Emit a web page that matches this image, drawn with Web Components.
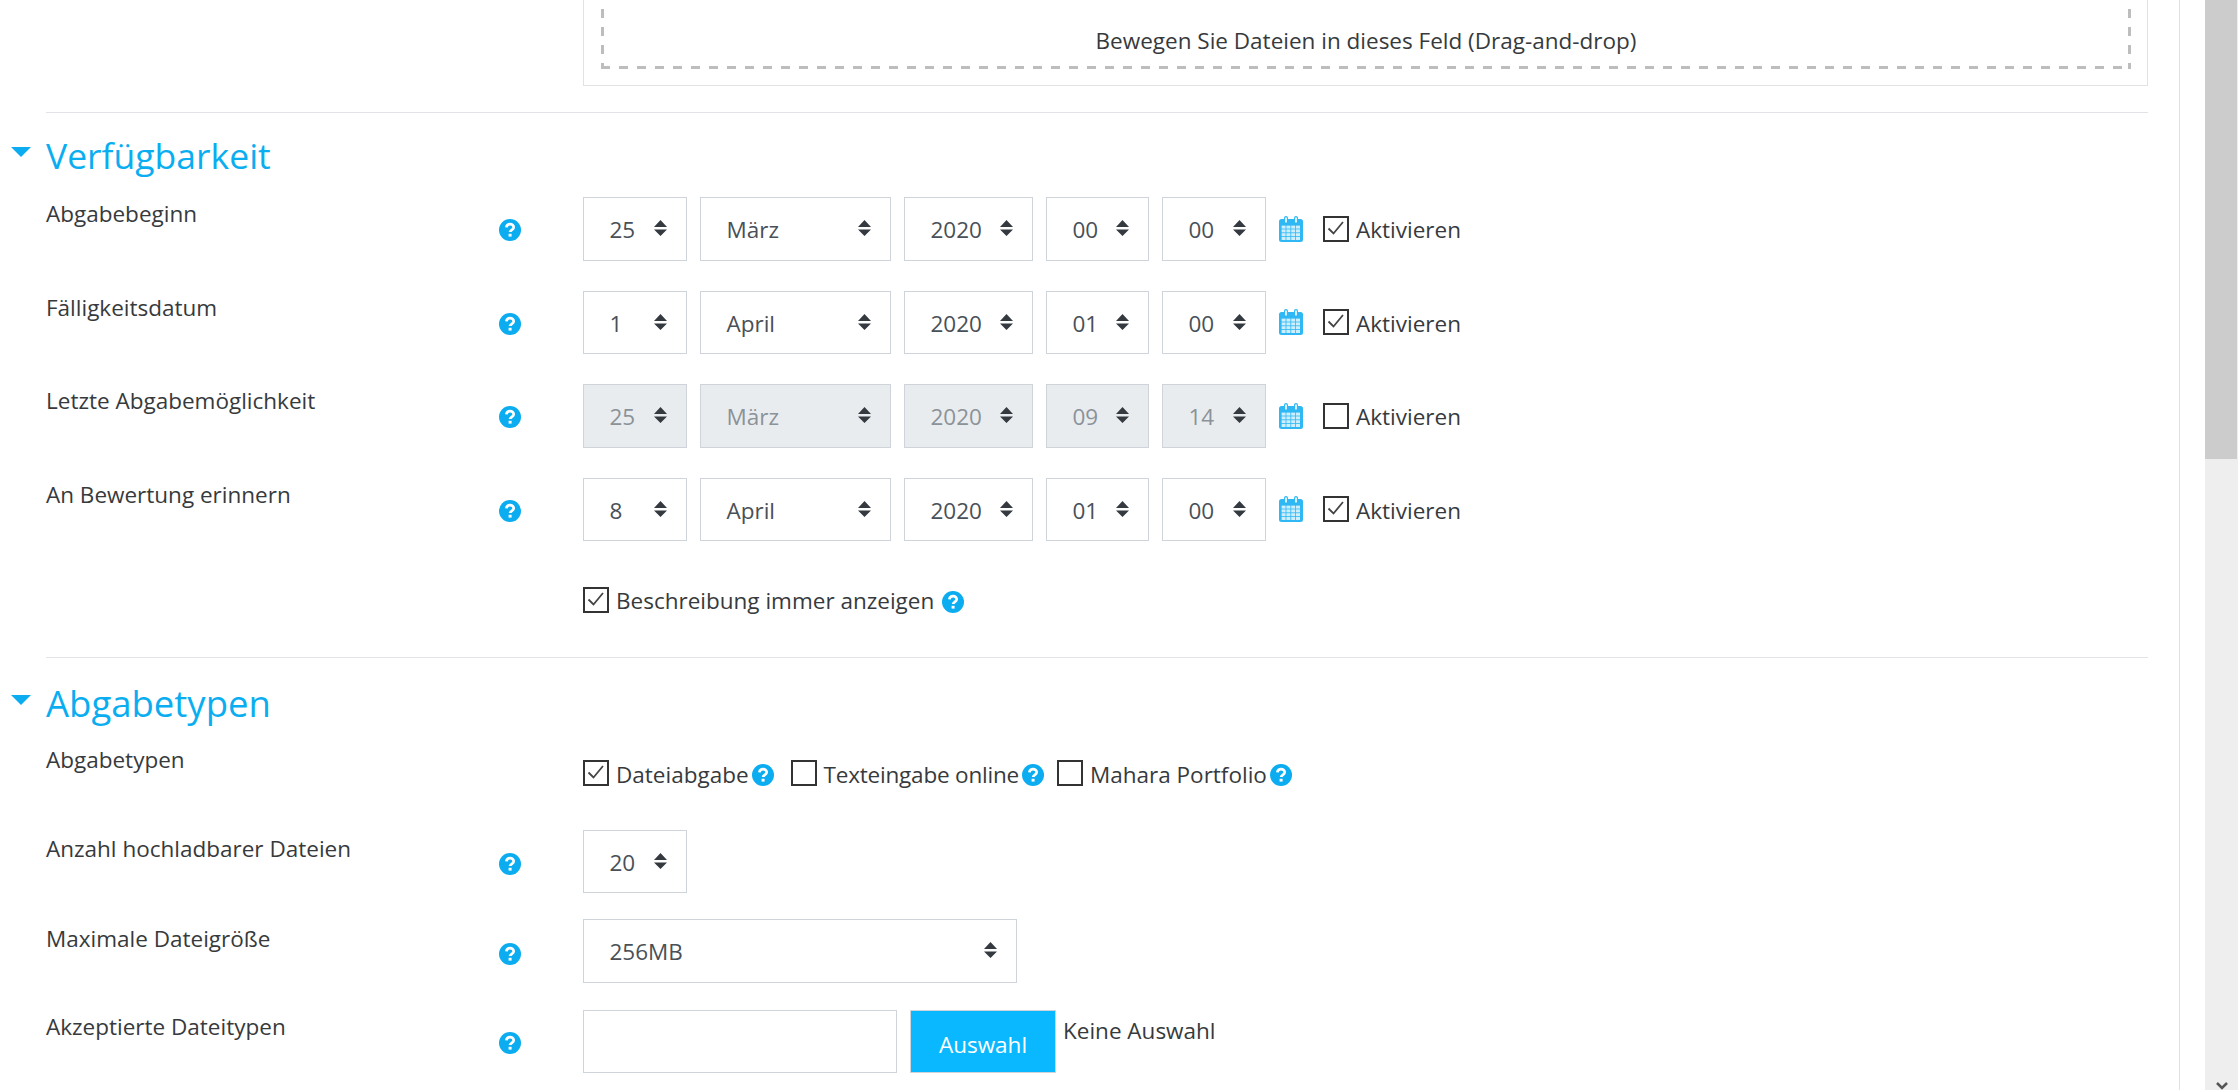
<!DOCTYPE html>
<html lang="de">
<head>
<meta charset="utf-8">
<title>Aufgabe bearbeiten</title>
<style>
  html, body { margin: 0; height: 100%; overflow: hidden; background: #fff; }
  body { font-family: "Open Sans", "Noto Sans", sans-serif; font-size: 22.5px; color: #373a3c; }
</style>
</head>
<body>
<app-page>
  <drop-zone>Bewegen Sie Dateien in dieses Feld (Drag-and-drop)</drop-zone>
  <form-divider style="margin-top:26px"></form-divider>

  <form-section style="font-size:35.5px">Verfügbarkeit</form-section>
  <form-row label="Abgabebeginn"><date-group day="25" month="März" year="2020" hour="00" minute="00" checked></date-group></form-row>
  <form-row label="Fälligkeitsdatum"><date-group day="1" month="April" year="2020" hour="01" minute="00" checked></date-group></form-row>
  <form-row label="Letzte Abgabemöglichkeit"><date-group day="25" month="März" year="2020" hour="09" minute="14" disabled></date-group></form-row>
  <form-row label="An Bewertung erinnern"><date-group day="8" month="April" year="2020" hour="01" minute="00" checked></date-group></form-row>
  <form-row nohelp style="height:85.5px;margin:0;align-items:flex-start">
    <div style="display:flex;align-items:center;gap:8px;padding-top:12px">
      <check-box checked>Beschreibung immer anzeigen</check-box><help-icon style="margin-top:4px"></help-icon>
    </div>
  </form-row>
  <form-divider></form-divider>

  <form-section style="height:85px;padding-top:6px;box-sizing:border-box;font-size:36.5px">Abgabetypen</form-section>
  <form-row label="Abgabetypen" nohelp style="height:87px;margin:0">
    <div style="display:flex;align-items:center;padding-top:14px">
      <check-box checked>Dateiabgabe</check-box><help-icon style="margin:3px 17px 0 3px"></help-icon>
      <check-box style="letter-spacing:-.2px">Texteingabe online</check-box><help-icon style="margin:3px 13px 0 3px"></help-icon>
      <check-box>Mahara Portfolio</check-box><help-icon style="margin:3px 0 0 3px"></help-icon>
    </div>
  </form-row>
  <form-row label="Anzahl hochladbarer Dateien" style="margin-bottom:26px;--label-shift:2px"><fake-select value="20" width="104"></fake-select></form-row>
  <form-row label="Maximale Dateigröße" style="margin-bottom:27px;--label-shift:3px"><fake-select value="256MB" width="434"></fake-select></form-row>
  <form-row label="Akzeptierte Dateitypen"><file-picker></file-picker></form-row>
</app-page>

<script>
const BLUE = '#0cadf0';

class HelpIcon extends HTMLElement {
  constructor() {
    super();
    this.attachShadow({ mode: 'open' }).innerHTML = `
      <style>:host { display: inline-flex; width: 22px; height: 22px; flex: none; }</style>
      <svg width="22" height="22" viewBox="0 0 22 22">
        <circle cx="11" cy="11" r="11" fill="${BLUE}"/>
        <path d="M7.4 8.4c.2-2 1.700-3.300 3.700-3.300s3.600 1.300 3.600 3.100c0 2.600-3.600 2.500-3.600 4.900" fill="none" stroke="#fff" stroke-width="2.700"/>
        <rect x="9.600" y="14.800" width="3" height="2.800" fill="#fff"/>
      </svg>`;
  }
}

class CalendarIcon extends HTMLElement {
  constructor() {
    super();
    let cells = '';
    for (let r = 0; r < 4; r++) {
      for (let c = 0; c < 4; c++) {
        cells += `<rect x="${2.6 + c * 4.8}" y="${9.6 + r * 3.8}" width="4" height="3" fill="#cdeefc"/>`;
      }
    }
    this.attachShadow({ mode: 'open' }).innerHTML = `
      <style>:host { display: inline-flex; width: 24px; height: 26px; flex: none; }</style>
      <svg width="24" height="26" viewBox="0 0 24 26">
        <rect x="0" y="3" width="24" height="23" rx="2.500" fill="#2fb8f3"/>
        ${cells}
        <rect x="5" y="0" width="4" height="8" rx="2" fill="#2fb8f3"/>
        <rect x="15" y="0" width="4" height="8" rx="2" fill="#2fb8f3"/>
        <rect x="6.200" y="1.500" width="1.600" height="5" fill="#fff"/>
        <rect x="16.200" y="1.500" width="1.600" height="5" fill="#fff"/>
      </svg>`;
  }
}

class CheckBox extends HTMLElement {
  constructor() {
    super();
    this.attachShadow({ mode: 'open' }).innerHTML = `
      <style>
        :host { display: inline-flex; align-items: center; gap: 7px; white-space: nowrap; }
        .box { width: 26px; height: 26px; box-sizing: border-box; border: 2.500px solid #333; flex: none; }
        .text { padding-top: 2px; }
        svg { display: block; }
      </style>
      <span class="box">
        ${this.hasAttribute('checked') ? `<svg width="21" height="21" viewBox="0 0 21 21"><path d="M3.500 10.500 8.500 15.500 18 4" fill="none" stroke="#444" stroke-width="1.800"/></svg>` : ''}
      </span>
      <span class="text"><slot></slot></span>`;
  }
}

class FakeSelect extends HTMLElement {
  constructor() {
    super();
    const disabled = this.hasAttribute('disabled');
    this.attachShadow({ mode: 'open' }).innerHTML = `
      <style>
        :host {
          display: flex; align-items: center; justify-content: space-between; flex: none;
          box-sizing: border-box; width: ${this.getAttribute('width')}px; height: 63.5px;
          padding: 2px 19px 0 25.500px;
          border: 1px solid #ced4da;
          background: ${disabled ? '#e9ecef' : '#fff'};
          color: ${disabled ? '#8b9298' : '#495057'};
        }
        svg { display: block; margin-top: -3px; }
      </style>
      <span>${this.getAttribute('value')}</span>
      <svg width="13" height="16" viewBox="0 0 13 16">
        <path d="M6.500 0 13 7H0ZM0 9.500H13L6.500 16Z" fill="#343a40"/>
      </svg>`;
  }
}

class DateGroup extends HTMLElement {
  constructor() {
    super();
    const a = n => this.getAttribute(n);
    const dis = this.hasAttribute('disabled') ? 'disabled' : '';
    const chk = this.hasAttribute('checked') ? 'checked' : '';
    this.attachShadow({ mode: 'open' }).innerHTML = `
      <style>
        :host { display: flex; align-items: center; gap: 13px; }
        check-box { margin-left: 7px; }
      </style>
      <fake-select width="104" value="${a('day')}" ${dis}></fake-select>
      <fake-select width="191" value="${a('month')}" ${dis}></fake-select>
      <fake-select width="129" value="${a('year')}" ${dis}></fake-select>
      <fake-select width="103" value="${a('hour')}" ${dis}></fake-select>
      <fake-select width="104" value="${a('minute')}" ${dis}></fake-select>
      <calendar-icon></calendar-icon>
      <check-box ${chk}>Aktivieren</check-box>`;
  }
}

class FormRow extends HTMLElement {
  constructor() {
    super();
    const help = this.hasAttribute('nohelp') ? '' : '<help-icon></help-icon>';
    this.attachShadow({ mode: 'open' }).innerHTML = `
      <style>
        :host { display: flex; align-items: flex-start; margin-bottom: 30px; }
        .label { width: 453px; flex: none; line-height: 34px; padding-top: var(--label-shift, 0); }
        .help { width: 84px; flex: none; padding-top: calc(20px + var(--label-shift, 0px) * 0.6); }
      </style>
      <div class="label">${this.getAttribute('label') || ''}</div>
      <div class="help">${help}</div>
      <slot></slot>`;
  }
}

class FormSection extends HTMLElement {
  constructor() {
    super();
    this.attachShadow({ mode: 'open' }).innerHTML = `
      <style>
        :host { display: flex; align-items: center; height: 84px; margin-left: -35px; gap: 15px; color: #0aaef0; font-size: 36px; }
        svg { flex: none; margin-top: -6px; }
      </style>
      <svg width="20" height="10" viewBox="0 0 20 10"><path d="M0 0H20L10 10Z" fill="${BLUE}"/></svg>
      <span><slot></slot></span>`;
  }
}

class FormDivider extends HTMLElement {
  constructor() {
    super();
    this.attachShadow({ mode: 'open' }).innerHTML = `
      <style>:host { display: block; height: 1px; background: #e2e3e6; }</style>`;
  }
}

class DropZone extends HTMLElement {
  constructor() {
    super();
    this.attachShadow({ mode: 'open' }).innerHTML = `
      <style>
        /* scrolled: the top of the box is above the window */
        :host { display: block; margin: -100px 0 0 537px; height: 186px; box-sizing: border-box; border: 1px solid #e2e2e2; padding: 0 16px 16px 17px; }
        .dash {
          box-sizing: border-box; height: 100%; display: flex; align-items: flex-end; justify-content: center;
          padding-bottom: 11px; line-height: 34px;
          background:
            repeating-linear-gradient(to bottom, #bdbdbd 0 9px, transparent 9px 18px) left top / 3px 100% no-repeat,
            repeating-linear-gradient(to bottom, #bdbdbd 0 9px, transparent 9px 18px) right top / 3px 100% no-repeat,
            repeating-linear-gradient(to right, #bdbdbd 0 9px, transparent 9px 18px) left bottom / 100% 3px no-repeat;
        }
      </style>
      <div class="dash"><span><slot></slot></span></div>`;
  }
}

class FilePicker extends HTMLElement {
  constructor() {
    super();
    this.attachShadow({ mode: 'open' }).innerHTML = `
      <style>
        :host { display: flex; align-items: flex-start; }
        .field { width: 314px; height: 63.5px; box-sizing: border-box; border: 1px solid #ced4da; background: #fff; margin-right: 13px; }
        button {
          width: 146px; height: 63.5px; box-sizing: border-box; border: 1px solid #ced4da; background: #0ab8ff; color: #fff;
          font: inherit; padding: 6px 0 0; margin-right: 7px;
        }
        span { line-height: 42px; }
      </style>
      <div class="field"></div><button>Auswahl</button><span>Keine Auswahl</span>`;
  }
}

class ScrollBar extends HTMLElement {
  constructor() {
    super();
    this.attachShadow({ mode: 'open' }).innerHTML = `
      <style>
        :host { display: flex; flex-direction: column; justify-content: space-between; width: 33px; flex: none; background: #eee; }
        .thumb { height: 459px; width: 32px; background: #ccc; }
        svg { display: block; margin: 0 auto; }
      </style>
      <div class="thumb"></div>
      <svg width="12" height="8" viewBox="0 0 12 8"><path d="M1 1 6 6 11 1" fill="none" stroke="#555" stroke-width="2.500"/></svg>`;
  }
}

class AppPage extends HTMLElement {
  constructor() {
    super();
    this.attachShadow({ mode: 'open' }).innerHTML = `
      <style>
        :host { display: flex; height: 1090px; overflow: hidden; }
        main { width: 2180px; box-sizing: border-box; flex: none; padding: 0 31px 0 46px; border-right: 1px solid #e0e0e0; }
        .gap { flex: 1; }
      </style>
      <main><slot></slot></main>
      <div class="gap"></div>
      <scroll-bar></scroll-bar>`;
  }
}

customElements.define('help-icon', HelpIcon);
customElements.define('calendar-icon', CalendarIcon);
customElements.define('check-box', CheckBox);
customElements.define('fake-select', FakeSelect);
customElements.define('date-group', DateGroup);
customElements.define('form-row', FormRow);
customElements.define('form-section', FormSection);
customElements.define('form-divider', FormDivider);
customElements.define('drop-zone', DropZone);
customElements.define('file-picker', FilePicker);
customElements.define('scroll-bar', ScrollBar);
customElements.define('app-page', AppPage);
</script>
</body>
</html>
